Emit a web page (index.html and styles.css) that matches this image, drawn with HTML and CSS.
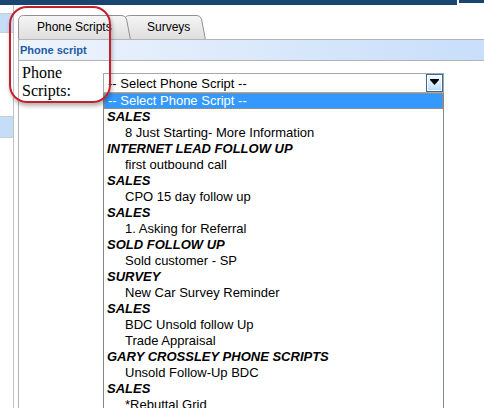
FILE: index.html
```html
<!DOCTYPE html>
<html>
<head>
<meta charset="utf-8">
<link rel="stylesheet" href="styles.css">
</head>
<body>
<div class="topbar"><div class="tb-a"></div><div class="tb-b"></div></div>
<div class="page">
  <div class="leftnav">
    <div class="navblock"></div>
    <div class="navblock second"></div>
  </div>
  <div class="content">
    <div class="tabs">
      <div class="tab tab-active">
        <svg class="tabshape" width="113" height="25" viewBox="0 0 113 25"><defs><linearGradient id="tg1" x1="0" y1="0" x2="0" y2="1"><stop offset="0" stop-color="#f6f6f6"/><stop offset="1" stop-color="#dddddd"/></linearGradient></defs><path d="M0.5,25 V5.5 Q0.5,0.5 5.5,0.5 H104 Q107,0.5 108.5,4 L112.5,25 Z" fill="url(#tg1)" stroke="#919191"/></svg>
        <span class="tablabel">Phone Scripts</span>
      </div>
      <div class="tab tab-second">
        <svg class="tabshape" width="82" height="25" viewBox="0 0 82 25"><defs><linearGradient id="tg2" x1="0" y1="0" x2="0" y2="1"><stop offset="0" stop-color="#f6f6f6"/><stop offset="1" stop-color="#dddddd"/></linearGradient></defs><path d="M0.5,25 V5.5 Q0.5,0.5 5.5,0.5 H73 Q76,0.5 77.5,4 L81.5,25 Z" fill="url(#tg2)" stroke="#919191"/></svg>
        <span class="tablabel">Surveys</span>
      </div>
    </div>
    <div class="panel">
      <div class="phead">Phone script</div>
      <div class="formrow">
        <div class="flabel">Phone Scripts:</div>
        <div class="selectwrap">
          <div class="selectbox">
            <span class="seltext">-- Select Phone Script --</span>
            <span class="selbtn"><svg width="9" height="6" viewBox="0 0 9 6"><path d="M0,0 H9 V1 L4.5,6 L0,1 Z" fill="#000"/></svg></span>
          </div>
          <div class="list">
            <div class="opt hl">-- Select Phone Script --</div>
            <div class="grp">SALES</div>
            <div class="opt">8 Just Starting- More Information</div>
            <div class="grp">INTERNET LEAD FOLLOW UP</div>
            <div class="opt">first outbound call</div>
            <div class="grp">SALES</div>
            <div class="opt">CPO 15 day follow up</div>
            <div class="grp">SALES</div>
            <div class="opt">1. Asking for Referral</div>
            <div class="grp">SOLD FOLLOW UP</div>
            <div class="opt">Sold customer - SP</div>
            <div class="grp">SURVEY</div>
            <div class="opt">New Car Survey Reminder</div>
            <div class="grp">SALES</div>
            <div class="opt">BDC Unsold follow Up</div>
            <div class="opt">Trade Appraisal</div>
            <div class="grp">GARY CROSSLEY PHONE SCRIPTS</div>
            <div class="opt">Unsold Follow-Up BDC</div>
            <div class="grp">SALES</div>
            <div class="opt">*Rebuttal Grid</div>
            <div class="opt">&nbsp;</div>
          </div>
        </div>
      </div>
    </div>
  </div>
</div>
<div class="annot"></div>
</body>
</html>
```
FILE: styles.css
```css
html, body {
  margin: 0;
  padding: 0;
  background: #ffffff;
}
body {
  width: 484px;
  height: 408px;
  overflow: hidden;
  position: relative;
  font-family: "Liberation Sans", Arial, sans-serif;
}
.topbar {
  display: flex;
  height: 5px;
}
.tb-a {
  flex: 0 0 457px;
  height: 5px;
  background: #1b4571;
}
.tb-b {
  flex: 1;
  margin-left: 2px;
  height: 3px;
  background: #1b4571;
}
.page {
  display: flex;
  height: 403px;
}
.leftnav {
  width: 13px;
  border-right: 1px solid #c2c2c2;
  padding-top: 8px;
  box-sizing: border-box;
  flex: 0 0 14px;
}
.navblock {
  height: 18px;
  background: #c6ddf8;
  border-top: 1px solid #c9ced6;
  border-bottom: 1px solid #c9ced6;
}
.navblock.second {
  margin-top: 83px;
  height: 20px;
}
.content {
  flex: 1;
  margin-left: 4px;
  padding-top: 10px;
  display: flex;
  flex-direction: column;
}
.tabs {
  display: flex;
  height: 24px;
  position: relative;
}
.tab {
  position: relative;
  height: 25px;
  box-sizing: border-box;
}
.tabshape {
  position: absolute;
  left: 0;
  top: 0;
  display: block;
}
.tab-active {
  width: 113px;
  z-index: 2;
}
.tab-second {
  width: 82px;
  margin-left: -7px;
  z-index: 1;
}
.tablabel {
  position: relative;
  display: block;
  font-size: 12px;
  line-height: 24px;
  color: #000;
}
.tab-active .tablabel {
  padding-left: 19px;
}
.tab-second .tablabel {
  padding-left: 23px;
}
.panel {
  flex: 1;
  border-left: 1px solid #b3b3b3;
  position: relative;
  z-index: 3;
}
.phead {
  height: 20px;
  border-top: 1px solid #b4b4b4;
  border-bottom: 1px solid #b4b4b4;
  background: linear-gradient(to right, #eef4fc, #c8defa);
  font-size: 11px;
  font-weight: bold;
  color: #1d5aa6;
  line-height: 20px;
  padding-left: 1px;
}
.formrow {
  display: flex;
  align-items: flex-start;
}
.flabel {
  width: 84px;
  box-sizing: border-box;
  padding: 3px 0 0 3px;
  font-family: "Liberation Serif", "Times New Roman", serif;
  font-size: 16px;
  line-height: 18px;
  color: #000;
}
.selectwrap {
  margin-top: 12px;
  width: 341px;
}
.selectbox {
  height: 20px;
  box-sizing: border-box;
  border: 1px solid #a3a9b1;
  display: flex;
  align-items: center;
  justify-content: space-between;
  background: #fff;
}
.seltext {
  font-size: 13px;
  padding-left: 4px;
  color: #000;
}
.selbtn {
  width: 17px;
  height: 18px;
  box-sizing: border-box;
  border: 1px solid #3b6a95;
  box-shadow: inset 0 0 0 1px #ffffff;
  background: linear-gradient(to bottom, #f4f9fd, #e1f0fb 45%, #b4dbf6);
  display: flex;
  align-items: center;
  justify-content: center;
  padding-bottom: 3px;
}
.selbtn svg {
  display: block;
}
.list {
  width: 341px;
  box-sizing: border-box;
  border-left: 1px solid #828790;
  border-right: 1px solid #828790;
  background: #fff;
  font-size: 13px;
  line-height: 16px;
  color: #000;
}
.opt {
  height: 16px;
  padding-left: 21px;
  white-space: nowrap;
}
.opt.hl {
  background: #3399ff;
  color: #fff;
  padding-left: 4px;
  outline: 1px dotted #d9883a;
  outline-offset: -1px;
}
.grp {
  height: 16px;
  padding-left: 3px;
  font-weight: bold;
  font-style: italic;
  white-space: nowrap;
}
.annot {
  position: absolute;
  left: 9px;
  top: 6px;
  width: 102px;
  height: 97px;
  box-sizing: border-box;
  border: 2px solid #c3202c;
  border-radius: 18px;
  box-shadow: 1px 3px 4px rgba(0, 0, 0, 0.3);
  z-index: 10;
}
```
